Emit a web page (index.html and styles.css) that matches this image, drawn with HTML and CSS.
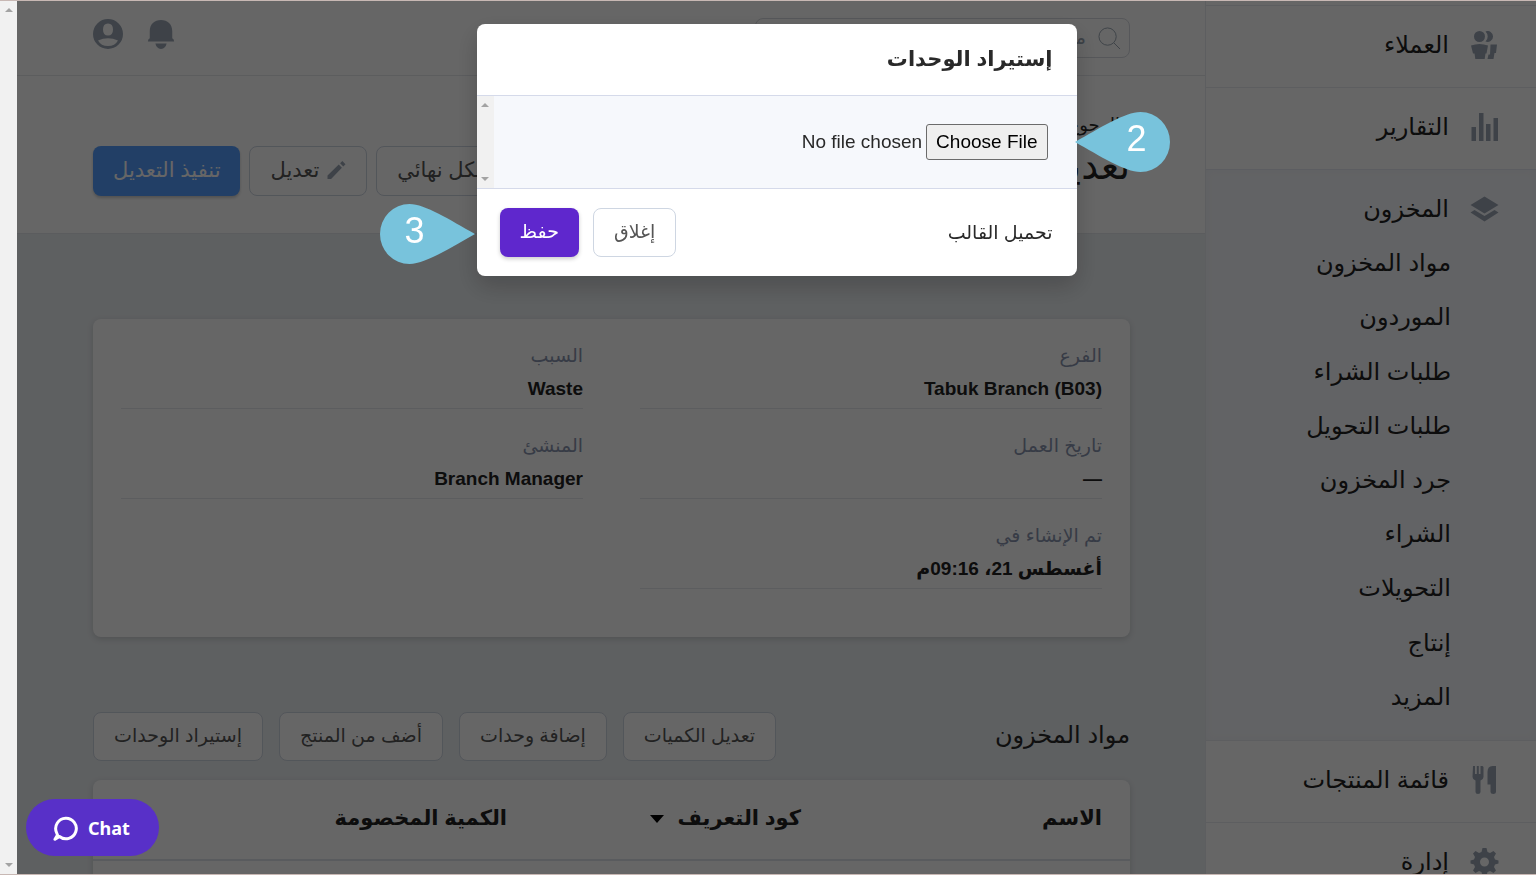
FILE: index.html
```html
<!DOCTYPE html>
<html lang="ar" dir="rtl">
<head>
    <meta charset="UTF-8">
    <meta name="viewport" content="width=device-width, initial-scale=1.0">
    <title>إستيراد الوحدات</title>
    <link rel="stylesheet" href="styles.css">
</head>
<body>
    <div class="app">
        <nav class="sidebar">
            <a href="#" class="nav-item">
                <svg class="nav-icon" viewBox="0 0 28 28"><circle cx="9" cy="5.500" r="5.500"/><path d="M15 .4a5.500 5.500 0 1 1 0 10.200 7 7 0 0 0 0-10.200zM.5 14.500q8.500-3 17 0l-1.500 8h-1l-.8 5.500H4.800L4 22.500H2.500zM20 13.500h6.500l-1 8.500h-1.500l-1 6h-6l1-4.500h1.500z"/></svg>
                <span>العملاء</span>
            </a>
            <a href="#" class="nav-item">
                <svg class="nav-icon" viewBox="0 0 28 28"><path d="M1 14h4.500v14H1zM8.500 0H13v28H8.500zM15.500 11H20v17h-4.500zM23 5h4.500v23H23z"/></svg>
                <span>التقارير</span>
            </a>
            <div class="nav-group">
                <a href="#" class="nav-head">
                    <svg class="nav-icon" viewBox="0 0 28 28"><path d="M14 1.500 28 10 14 18.500 0 10zM4 15l10 6 10-6 4 2.500-14 9-14-9z"/></svg>
                    <span>المخزون</span>
                </a>
                <div class="sub-list">
                    <a href="#">مواد المخزون</a>
                    <a href="#">الموردون</a>
                    <a href="#">طلبات الشراء</a>
                    <a href="#">طلبات التحويل</a>
                    <a href="#">جرد المخزون</a>
                    <a href="#">الشراء</a>
                    <a href="#">التحويلات</a>
                    <a href="#">إنتاج</a>
                    <a href="#">المزيد</a>
                </div>
            </div>
            <a href="#" class="nav-item">
                <svg class="nav-icon" viewBox="0 0 28 28"><path d="M2.500 0h2v8h1.800V0h2v8H10V0h2l1 1v10q0 2-3 3.500V26q0 2-2.500 2T5 26V14.500Q2 13 2 11zM25.500 0v26q0 2-2.700 2T20 26v-7.500h-3V6q0-6 5-6z"/></svg>
                <span>قائمة المنتجات</span>
            </a>
            <a href="#" class="nav-item">
                <svg class="nav-icon" viewBox="0 0 28 28"><path fill-rule="evenodd" d="M12 0h4l1 4 2.500 1L23 3l2.500 2.500-2 3.500 1 2.500 3.500 1v3l-3.500 1-1 2.500 2 3.500L23 25l-3.500-2-2.500 1-1 4h-4l-1-4-2.500-1L5 25l-2.500-2.500 2-3.500-1-2.500L0 15.500v-3l3.500-1 1-2.500-2-3.500L5 3l3.500 2L11 4zM14 9.500a4.500 4.500 0 1 0 0 9 4.500 4.500 0 1 0 0-9z"/></svg>
                <span>إدارة</span>
            </a>
        </nav>

        <main class="main">
            <header class="topbar">
                <label class="search">
                    <svg class="search-icon" viewBox="0 0 24 24"><circle cx="10" cy="10" r="9"/><path d="M16.500 16.500 23 23"/></svg>
                    <input type="text" placeholder="ما الذي تبحث عنه؟" aria-label="بحث">
                </label>
                <div class="top-icons">
                    <svg class="bell" viewBox="0 0 28 32"><path d="M14 1c7 0 12 4.500 12 12v7.500q2 1 2 3.500H0q0-2.500 2-3.500V13C2 5.500 7 1 14 1zM8 26h12q-1 5-6 6-5-1-6-6z"/></svg>
                    <svg class="avatar" viewBox="0 0 30 30"><path fill-rule="evenodd" d="M15 0a15 15 0 1 0 0 30 15 15 0 1 0 0-30zM15 4.500q5 0 5 6t-5 6-5-6 5-6zM5 21.500q10-4.500 20 0-3 5.500-10 5.500T5 21.500z"/></svg>
                </div>
            </header>

            <section class="page-head">
                <div>
                    <a href="#" class="back"><svg viewBox="0 0 6 10"><path d="M1 1l4 4-4 4"/></svg>الرجوع</a>
                    <h1>تعديل الكمية</h1>
                </div>
                <div class="actions">
                    <button class="btn">إغلاق بشكل نهائي</button>
                    <button class="btn"><svg class="pencil" viewBox="0 0 20 20"><path d="M0 20v-4L12.500 4l3.500 3.500L4 20zM14 2.500 16.500 0 20 3.500 17.500 6z"/></svg>تعديل</button>
                    <button class="btn btn-blue">تنفيذ التعديل</button>
                </div>
            </section>

            <section class="card details">
                <div class="field"><span>الفرع</span><strong><bdi dir="ltr">Tabuk Branch (B03)</bdi></strong></div>
                <div class="field"><span>السبب</span><strong>Waste</strong></div>
                <div class="field"><span>تاريخ العمل</span><strong>—</strong></div>
                <div class="field"><span>المنشئ</span><strong>Branch Manager</strong></div>
                <div class="field"><span>تم الإنشاء في</span><strong>أغسطس 21، 09:16م</strong></div>
            </section>

            <section class="items-head">
                <h2>مواد المخزون</h2>
                <div class="items-actions">
                    <button class="btn">تعديل الكميات</button>
                    <button class="btn">إضافة وحدات</button>
                    <button class="btn">أضف من المنتج</button>
                    <button class="btn">إستيراد الوحدات</button>
                </div>
            </section>

            <table class="card items">
                <thead>
                    <tr>
                        <th>الاسم</th>
                        <th>كود التعريف <span class="caret"></span></th>
                        <th>الكمية المخصومة</th>
                    </tr>
                </thead>
                <tbody>
                    <tr><td></td><td></td><td></td></tr>
                </tbody>
            </table>
        </main>
        <div class="rail"><i class="up"></i><i class="down"></i></div>
    </div>

    <!-- Import modal -->
    <div class="overlay">
        <div class="modal">
            <h3 class="modal-title">إستيراد الوحدات</h3>
            <div class="modal-body">
                <input type="file" class="file" aria-label="ملف الوحدات">
                <div class="rail"><i class="up"></i><i class="down"></i></div>
            </div>
            <div class="modal-foot">
                <a href="#">تحميل القالب</a>
                <div class="modal-actions">
                    <button class="btn">إغلاق</button>
                    <button class="btn btn-save">حفظ</button>
                </div>
            </div>
            <div class="marker marker-file">
                <svg viewBox="0 0 95 60"><path d="M95 30C70 16 45 0 29.500 0a29.500 30 0 0 0 0 60C45 60 70 44 95 30z"/></svg>
                <span>2</span>
            </div>
            <div class="marker marker-save">
                <svg viewBox="0 0 95 60"><path d="M95 30C70 16 45 0 29.500 0a29.500 30 0 0 0 0 60C45 60 70 44 95 30z"/></svg>
                <span>3</span>
            </div>
        </div>
    </div>

    <button class="chat" dir="ltr">
        <svg viewBox="0 0 26 26"><path d="M6.500 21.500A10.300 10.300 0 1 0 3.500 17.500L4.500 20 2 24.300z"/></svg>
        Chat
    </button>
</body>
</html>
```
FILE: styles.css
```css
* {
    box-sizing: border-box;
}

body {
    margin: 0;
    font-family: "Liberation Sans", "DejaVu Sans", sans-serif;
    font-size: 19px;
    color: #292929;
    background-color: #ebeff2;
}

a {
    color: inherit;
    text-decoration: none;
}

button,
input {
    font-family: inherit;
    font-size: inherit;
}

.app {
    display: flex;
    height: 100vh;
    overflow: hidden;
    border: solid #c8b8b4;
    border-width: 1px 0;
}

/* Sidebar */
.sidebar {
    width: 331px;
    flex-shrink: 0;
    padding-top: 4px;
    background-color: #fff;
    border-left: 1px solid #e9ebef;
    font-size: 24px;
    color: #222;
}

.nav-item,
.nav-head {
    display: flex;
    align-items: center;
    gap: 21px;
    height: 82px;
    padding: 0 37px 4px 0;
    border-top: 1px solid #e9ebef;
}

.nav-icon {
    width: 29px;
    height: 28px;
    fill: #9ba6b5;
}

.nav-group {
    padding: 14px 0;
    background-color: #f6f8fc;
    border-top: 1px solid #e6e8f2;
    box-shadow: inset 0 0 10px #eff1f6;
}

.nav-head {
    height: 54px;
    border: none;
}

.sub-list {
    display: grid;
    grid-auto-rows: 1fr;
    align-items: center;
    height: 488px;
    padding: 0 85px 0 0;
    margin: -2px 0 2px;
}

/* Fake scrollbars */
.rail {
    display: flex;
    flex-direction: column;
    justify-content: space-between;
    align-items: center;
    width: 17px;
    flex-shrink: 0;
    padding: 7px 0;
    background-color: #f1f1f1;
}

.up,
.down {
    border: 4px solid transparent;
}

.up {
    border-top: none;
    border-bottom-color: #a3a3a3;
}

.down {
    border-bottom: none;
    border-top-color: #a3a3a3;
}

/* Main column */
.main {
    flex: 1;
    min-width: 0;
}

.topbar {
    display: flex;
    justify-content: space-between;
    align-items: center;
    height: 75px;
    padding: 0 75px 0 76px;
    background-color: #fff;
    border-bottom: 1px solid #e6e8ec;
}

.search {
    display: flex;
    align-items: center;
    gap: 10px;
    width: 375px;
    height: 40px;
    padding: 0 8px;
    border: 1px solid #d7dae0;
    border-radius: 8px;
}

.search input {
    flex: 1;
    min-width: 0;
    border: none;
    outline: none;
    background: none;
}

.search input::placeholder {
    color: #99a5b2;
}

.search-icon {
    width: 23px;
    height: 23px;
    fill: none;
    stroke: #99a5b2;
}

.top-icons {
    display: flex;
    align-items: center;
    gap: 23px;
    padding-bottom: 8px;
}

.bell,
.avatar {
    width: 30px;
    height: 30px;
    fill: #9ba6b5;
}

.page-head {
    display: flex;
    justify-content: space-between;
    align-items: center;
    height: 158px;
    padding: 0 75px 0 76px;
    background-color: #fff;
    border-bottom: 1px solid #e3e6ea;
}

.back {
    display: flex;
    align-items: center;
    gap: 4px;
    font-size: 18px;
}

.back svg {
    width: 6px;
    height: 10px;
    fill: none;
    stroke: #222;
}

h1 {
    margin: 0;
    font-size: 38px;
    line-height: 60px;
    font-weight: normal;
    color: #222;
}

.actions {
    display: flex;
    gap: 9px;
    padding-top: 32px;
}

.btn {
    display: flex;
    align-items: center;
    justify-content: center;
    gap: 8px;
    height: 49px;
    padding: 0 20px 2px;
    border: 1px solid #ced6e2;
    border-radius: 8px;
    background-color: #fff;
    color: #555;
    white-space: nowrap;
    cursor: pointer;
}

.actions .btn {
    height: 50px;
    font-size: 21px;
}

.actions .btn-blue {
    border: none;
    background-color: #559eff;
    color: #fff;
    box-shadow: 0 2px 3px rgba(0, 0, 0, 0.2);
}

.pencil {
    width: 19px;
    height: 18px;
    fill: #9ba6b5;
}

.card {
    background-color: #fff;
    border-radius: 8px;
    box-shadow: 0 2px 6px rgba(0, 0, 0, 0.15);
}

.details {
    display: grid;
    grid-template-columns: 1fr 1fr;
    column-gap: 57px;
    margin: 85px 75px 75px 76px;
    padding: 0 28px 48px;
}

.field {
    height: 90px;
    padding-top: 24px;
    border-bottom: 1px solid #e6e8ee;
}

.field span,
.field strong {
    display: block;
    line-height: 26px;
}

.field span {
    margin-bottom: 7px;
    color: #8995ae;
}

.field strong {
    color: #222;
}

.items-head {
    display: flex;
    justify-content: space-between;
    align-items: center;
    margin: 0 75px 19px 76px;
}

h2 {
    margin: 0;
    padding-bottom: 4px;
    font-size: 24px;
    font-weight: normal;
}

.items-actions {
    display: flex;
    gap: 16px;
}

.items {
    width: calc(100% - 151px);
    margin-right: 75px;
    border-spacing: 0;
    table-layout: fixed;
}

.items th {
    height: 81px;
    padding: 0 28px 4px 0;
    border-bottom: 2px solid #dfe3ec;
    font-size: 21px;
    text-align: right;
    color: #222;
}

.items th:first-child {
    width: 301px;
}

.items th:nth-child(2) {
    width: 294px;
}

.items td {
    height: 80px;
}

.caret {
    display: inline-block;
    margin-right: 8px;
    border: 7px solid transparent;
    border-top: 8px solid #000;
    border-bottom: none;
    vertical-align: middle;
}

/* Modal */
.overlay {
    position: fixed;
    top: 1px;
    bottom: 1px;
    left: 17px;
    right: 0;
    padding-top: 23px;
    background-color: rgba(0, 0, 0, 0.6);
}

.modal {
    position: relative;
    width: 600px;
    margin: 0 auto;
    background-color: #fff;
    border-radius: 8px;
    box-shadow: 0 10px 24px rgba(0, 0, 0, 0.2);
}

.modal-title {
    margin: 0;
    padding: 0 24px 2px;
    font-size: 21px;
    line-height: 69px;
}

.modal-body {
    display: flex;
    justify-content: space-between;
    height: 94px;
    border: solid #d5daea;
    border-width: 1px 0;
    background-color: #f6f8fc;
}

.file {
    height: 36px;
    margin: 28px 29px 0 0;
}

.file::file-selector-button {
    height: 36px;
    padding: 0 9px;
    border: 1px solid #6b6b6b;
    border-radius: 3px;
    background-color: #efefef;
    font: inherit;
}

.modal-foot {
    display: flex;
    justify-content: space-between;
    align-items: center;
    height: 87px;
    padding: 0 24px 0 23px;
}

.modal-actions {
    display: flex;
    gap: 14px;
}

.btn-save {
    border: none;
    background-color: #5f27cd;
    color: #fff;
    box-shadow: 0 2px 4px rgba(0, 0, 0, 0.2);
}

/* Step markers */
.marker {
    position: absolute;
    width: 95px;
    height: 60px;
    font-size: 36px;
    line-height: 54px;
    color: #fff;
}

.marker svg {
    position: absolute;
    inset: 0;
    fill: #78c3dc;
}

.marker span {
    position: absolute;
    left: 25px;
}

.marker-file {
    top: 88px;
    right: -93px;
}

.marker-file svg {
    transform: scaleX(-1);
}

.marker-file span {
    left: 52px;
}

.marker-save {
    top: 180px;
    left: -97px;
}

/* Chat launcher */
.chat {
    position: fixed;
    left: 26px;
    bottom: 19px;
    display: flex;
    align-items: center;
    justify-content: center;
    gap: 9px;
    width: 133px;
    height: 57px;
    padding: 0 8px 0 6px;
    border: none;
    border-radius: 29px;
    background-color: #5830c8;
    color: #fff;
    font-family: "Noto Sans", sans-serif;
    font-size: 18px;
    font-weight: bold;
}

.chat svg {
    width: 26px;
    height: 26px;
    fill: none;
    stroke: #fff;
    stroke-width: 3;
    stroke-linejoin: round;
}
```
